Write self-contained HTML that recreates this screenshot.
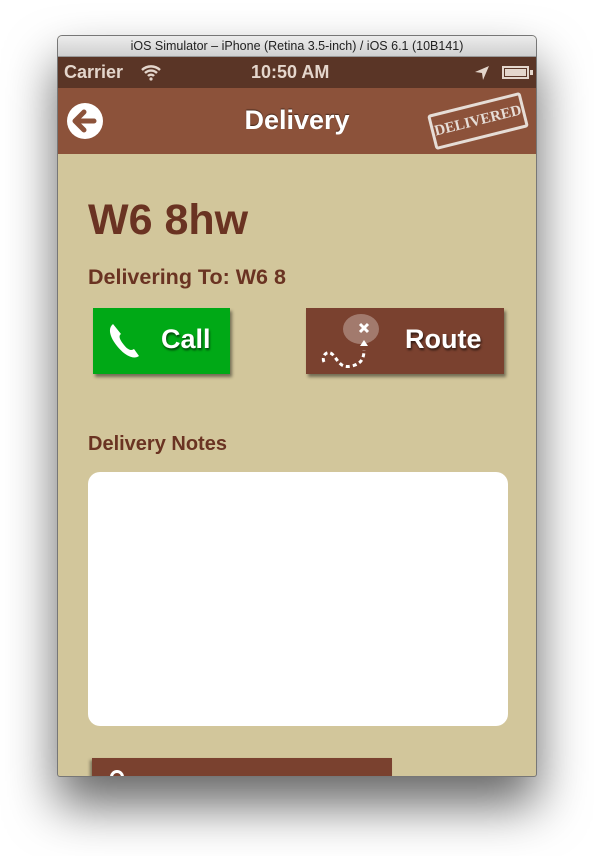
<!DOCTYPE html>
<html><head><meta charset="utf-8"><style>
*{margin:0;padding:0;box-sizing:border-box}
body{width:594px;height:856px;background:#fff;position:relative;overflow:hidden;font-family:"Liberation Sans",sans-serif}
.win{position:absolute;left:57px;top:35px;width:480px;height:742px;border-radius:5px 5px 3px 3px;box-shadow:0 28px 50px rgba(0,0,0,.6);overflow:hidden;background:#d2c69b;border:1px solid #777}
.title{height:21px;background:linear-gradient(#ececec,#d0d0d0);text-align:center;font-size:12.5px;line-height:21px;color:#222;border-bottom:1px solid #999}
.status{height:31px;background:#5a3526;color:#e4d6cc;font-weight:bold;font-size:18px;position:relative}
.nav{height:66px;background:#8c523a;position:relative}
.abs{position:absolute}
.brown{color:#6a3322;font-weight:bold}
.btn{position:absolute;box-shadow:2px 3px 3px rgba(0,0,0,.45);color:#fff;font-weight:bold;font-size:27px;text-shadow:1px 2px 2px rgba(0,0,0,.6)}
</style></head><body>
<div class="win">
<div class="title">iOS Simulator – iPhone (Retina 3.5-inch) / iOS 6.1 (10B141)</div>
<div class="status">
<span class="abs" style="left:6px;top:5px">Carrier</span>
<svg class="abs" style="left:82px;top:6px" width="22" height="18" viewBox="0 0 22 18"><path d="M2 7a13 13 0 0 1 18 0M5 10a8.5 8.5 0 0 1 12 0M8 13a4 4 0 0 1 6 0" stroke="#e4d6cc" stroke-width="2.4" fill="none"/><circle cx="11" cy="16" r="1.6" fill="#e4d6cc"/></svg>
<span class="abs" style="left:193px;top:5px">10:50 AM</span>
<svg class="abs" style="left:416px;top:8px" width="16" height="16" viewBox="0 0 16 16"><path d="M15 1L1 7l7 1 1 7z" fill="#e4d6cc"/></svg>
<div class="abs" style="left:444px;top:9px;width:27px;height:13px;border:2px solid #e4d6cc;padding:1px"><div style="background:#e4d6cc;height:100%"></div></div>
<div class="abs" style="left:472px;top:13px;width:3px;height:5px;background:#e4d6cc"></div>
</div>
<div class="nav">
<svg class="abs" style="left:8px;top:14px" width="38" height="38" viewBox="0 0 38 38"><circle cx="19" cy="19" r="18" fill="#fff"/><path d="M10 19h18M18 10l-9 9 9 9" stroke="#8c523a" stroke-width="5" fill="none" stroke-linecap="round" stroke-linejoin="round"/></svg>
<div class="abs" style="left:0;width:100%;top:17px;text-align:center;color:#fff;font-weight:bold;font-size:27px;text-shadow:0 -1px 1px rgba(0,0,0,.5)">Delivery</div>
<div class="abs" style="left:372px;top:15px;width:96px;height:36px;border:3px solid #e6ddd6;border-radius:3px;transform:rotate(-14deg);color:#e6ddd6;font-family:'Liberation Serif',serif;font-weight:bold;font-size:15px;text-align:center;line-height:30px;overflow:hidden;white-space:nowrap">DELIVERED</div>
</div>
<div class="abs brown" style="left:30px;top:160px;font-size:43px">W6 8hw</div>
<div class="abs brown" style="left:30px;top:229px;font-size:21.5px">Delivering To: W6 8</div>
<div class="btn" style="left:35px;top:272px;width:137px;height:66px;background:#00a916">
<svg class="abs" style="left:12px;top:12px" width="42" height="42" viewBox="0 0 42 42"><path d="M8 4c-5 4-4 12 4 22s17 14 22 10l-5-7c-3 2-6 1-10-4s-6-9-3-11z" fill="#fff"/></svg>
<span class="abs" style="left:68px;top:16px">Call</span></div>
<div class="btn" style="left:248px;top:272px;width:198px;height:66px;background:#7a412f">
<div class="abs" style="left:37px;top:6px;width:36px;height:30px;border-radius:50%;background:rgba(255,255,255,.3)"></div>
<svg class="abs" style="left:14px;top:10px" width="60" height="52" viewBox="0 0 60 52"><path d="M40 6l8 8M48 6l-8 8" stroke="#fff" stroke-width="3"/><path d="M44 22l-4 6h8z" fill="#fff"/><path d="M4 44c-3-6 4-14 10-6s8 12 18 10c8-2 12-6 12-16" stroke="#fff" stroke-width="3" fill="none" stroke-dasharray="4 3"/></svg>
<span class="abs" style="left:99px;top:16px">Route</span></div>
<div class="abs brown" style="left:30px;top:397px;font-size:20px">Delivery Notes</div>
<div class="abs" style="left:30px;top:436px;width:420px;height:254px;background:#fff;border-radius:12px"></div>
<div class="abs" style="left:34px;top:722px;width:300px;height:30px;background:#7a412f;box-shadow:-2px 2px 3px rgba(0,0,0,.4)"><div class="abs" style="left:18px;top:12px;width:14px;height:14px;border:3px solid #fff;border-radius:50%"></div></div>
</div>
</body></html>
